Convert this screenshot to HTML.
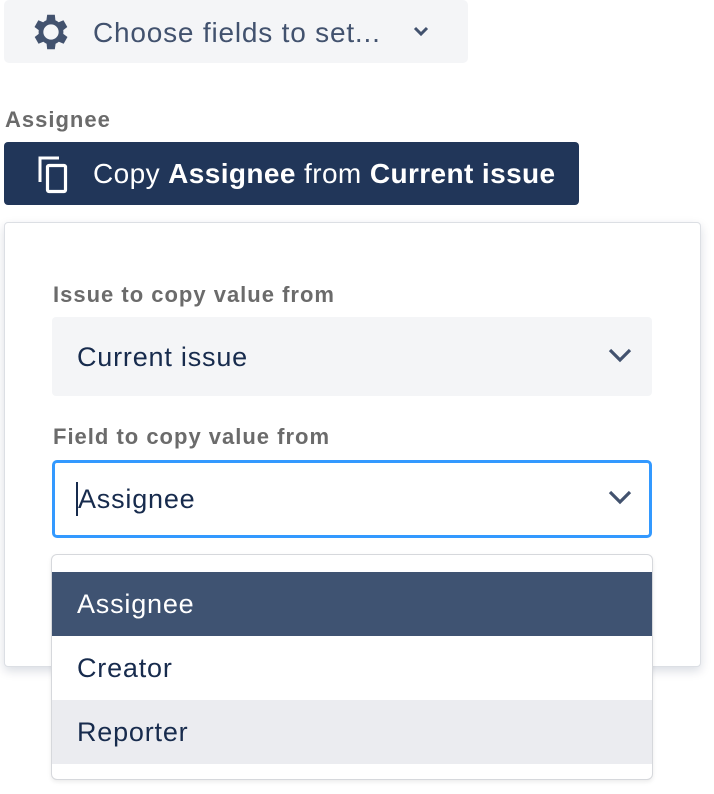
<!DOCTYPE html>
<html><head><meta charset="utf-8"><style>
body{margin:0;width:714px;height:794px;background:#fff;font-family:"Liberation Sans",sans-serif;position:relative;overflow:hidden}
.abs{position:absolute}
.t{white-space:nowrap}
.lbl{font-size:22px;font-weight:bold;color:#6b6b6b;letter-spacing:1px}
.val{font-size:27px;letter-spacing:0.8px}
</style></head><body>
<div class="abs" style="left:4px;top:0;width:464px;height:63px;background:#f4f5f7;border-radius:5px"></div>
<svg class="abs" style="left:28px;top:9px" width="46" height="46" viewBox="0 0 24 24"><path fill="#42526e" d="M19.4 13a7.5 7.5 0 0 0 0-2l2.1-1.6-2-3.5-2.5 1a7 7 0 0 0-1.7-1L15 3h-4l-.4 2.9a7 7 0 0 0-1.7 1l-2.5-1-2 3.5L6.6 11a7.5 7.5 0 0 0 0 2l-2.1 1.6 2 3.5 2.5-1a7 7 0 0 0 1.7 1L11 21h4l.4-2.9a7 7 0 0 0 1.7-1l2.5 1 2-3.5zM13 16a4 4 0 1 1 0-8 4 4 0 0 1 0 8z" transform="translate(-1 0)"/></svg>
<div class="abs t" style="left:93px;top:17px;font-size:28px;letter-spacing:0.8px;color:#42526e">Choose fields to set...</div>
<svg class="abs" style="left:412px;top:25px" width="18" height="14" viewBox="0 0 18 14"><path d="M3 3l6 6 6-6" stroke="#42526e" stroke-width="3" fill="none"/></svg>
<div class="abs t lbl" style="left:5px;top:107px">Assignee</div>
<div class="abs" style="left:4px;top:142px;width:575px;height:63px;background:#213659;border-radius:4px"></div>
<svg class="abs" style="left:36px;top:154px" width="36" height="40" viewBox="0 0 36 40"><path d="M4 28V4h19" stroke="#fff" stroke-width="3" fill="none"/><rect x="11.5" y="11.5" width="18" height="26" rx="1.5" stroke="#fff" stroke-width="3.2" fill="none"/></svg>
<div class="abs t" style="left:93px;top:158px;font-size:28px;letter-spacing:0.4px;color:#fff">Copy <b>Assignee</b> from <b>Current issue</b></div>
<div class="abs" style="left:4px;top:222px;width:695px;height:443px;background:#fff;border:1px solid #dcdfe4;border-radius:4px;box-shadow:0 4px 10px rgba(9,30,66,.15)"></div>
<div class="abs t lbl" style="left:53px;top:282px">Issue to copy value from</div>
<div class="abs" style="left:52px;top:317px;width:600px;height:79px;background:#f4f5f7;border-radius:4px"></div>
<div class="abs t val" style="left:77px;top:342px;color:#172b4d">Current issue</div>
<svg class="abs" style="left:606px;top:346px" width="28" height="20" viewBox="0 0 28 20"><path d="M4 4l10 10 10-10" stroke="#42526e" stroke-width="3.2" fill="none"/></svg>
<div class="abs t lbl" style="left:53px;top:424px">Field to copy value from</div>
<div class="abs" style="left:52px;top:460px;width:594px;height:72px;border:3px solid #3399ff;border-radius:5px;background:#fff"></div>
<div class="abs" style="left:76px;top:482px;width:2px;height:34px;background:#172b4d"></div>
<div class="abs t val" style="left:78px;top:484px;color:#172b4d">Assignee</div>
<svg class="abs" style="left:606px;top:488px" width="28" height="20" viewBox="0 0 28 20"><path d="M4 4l10 10 10-10" stroke="#42526e" stroke-width="3.2" fill="none"/></svg>
<div class="abs" style="left:51px;top:554px;width:600px;height:224px;background:#fff;border:1px solid #d6d8dc;border-radius:6px;overflow:hidden;box-shadow:0 2px 4px rgba(0,0,0,.08)">
<div style="position:absolute;top:17px;left:0;width:600px;height:64px;background:#3f5372"></div>
<div style="position:absolute;top:145px;left:0;width:600px;height:64px;background:#ebecf0"></div>
<div class="t val" style="position:absolute;left:25px;top:34px;color:#fff">Assignee</div>
<div class="t val" style="position:absolute;left:25px;top:98px;color:#172b4d">Creator</div>
<div class="t val" style="position:absolute;left:25px;top:162px;color:#172b4d">Reporter</div>
</div>
</body></html>
